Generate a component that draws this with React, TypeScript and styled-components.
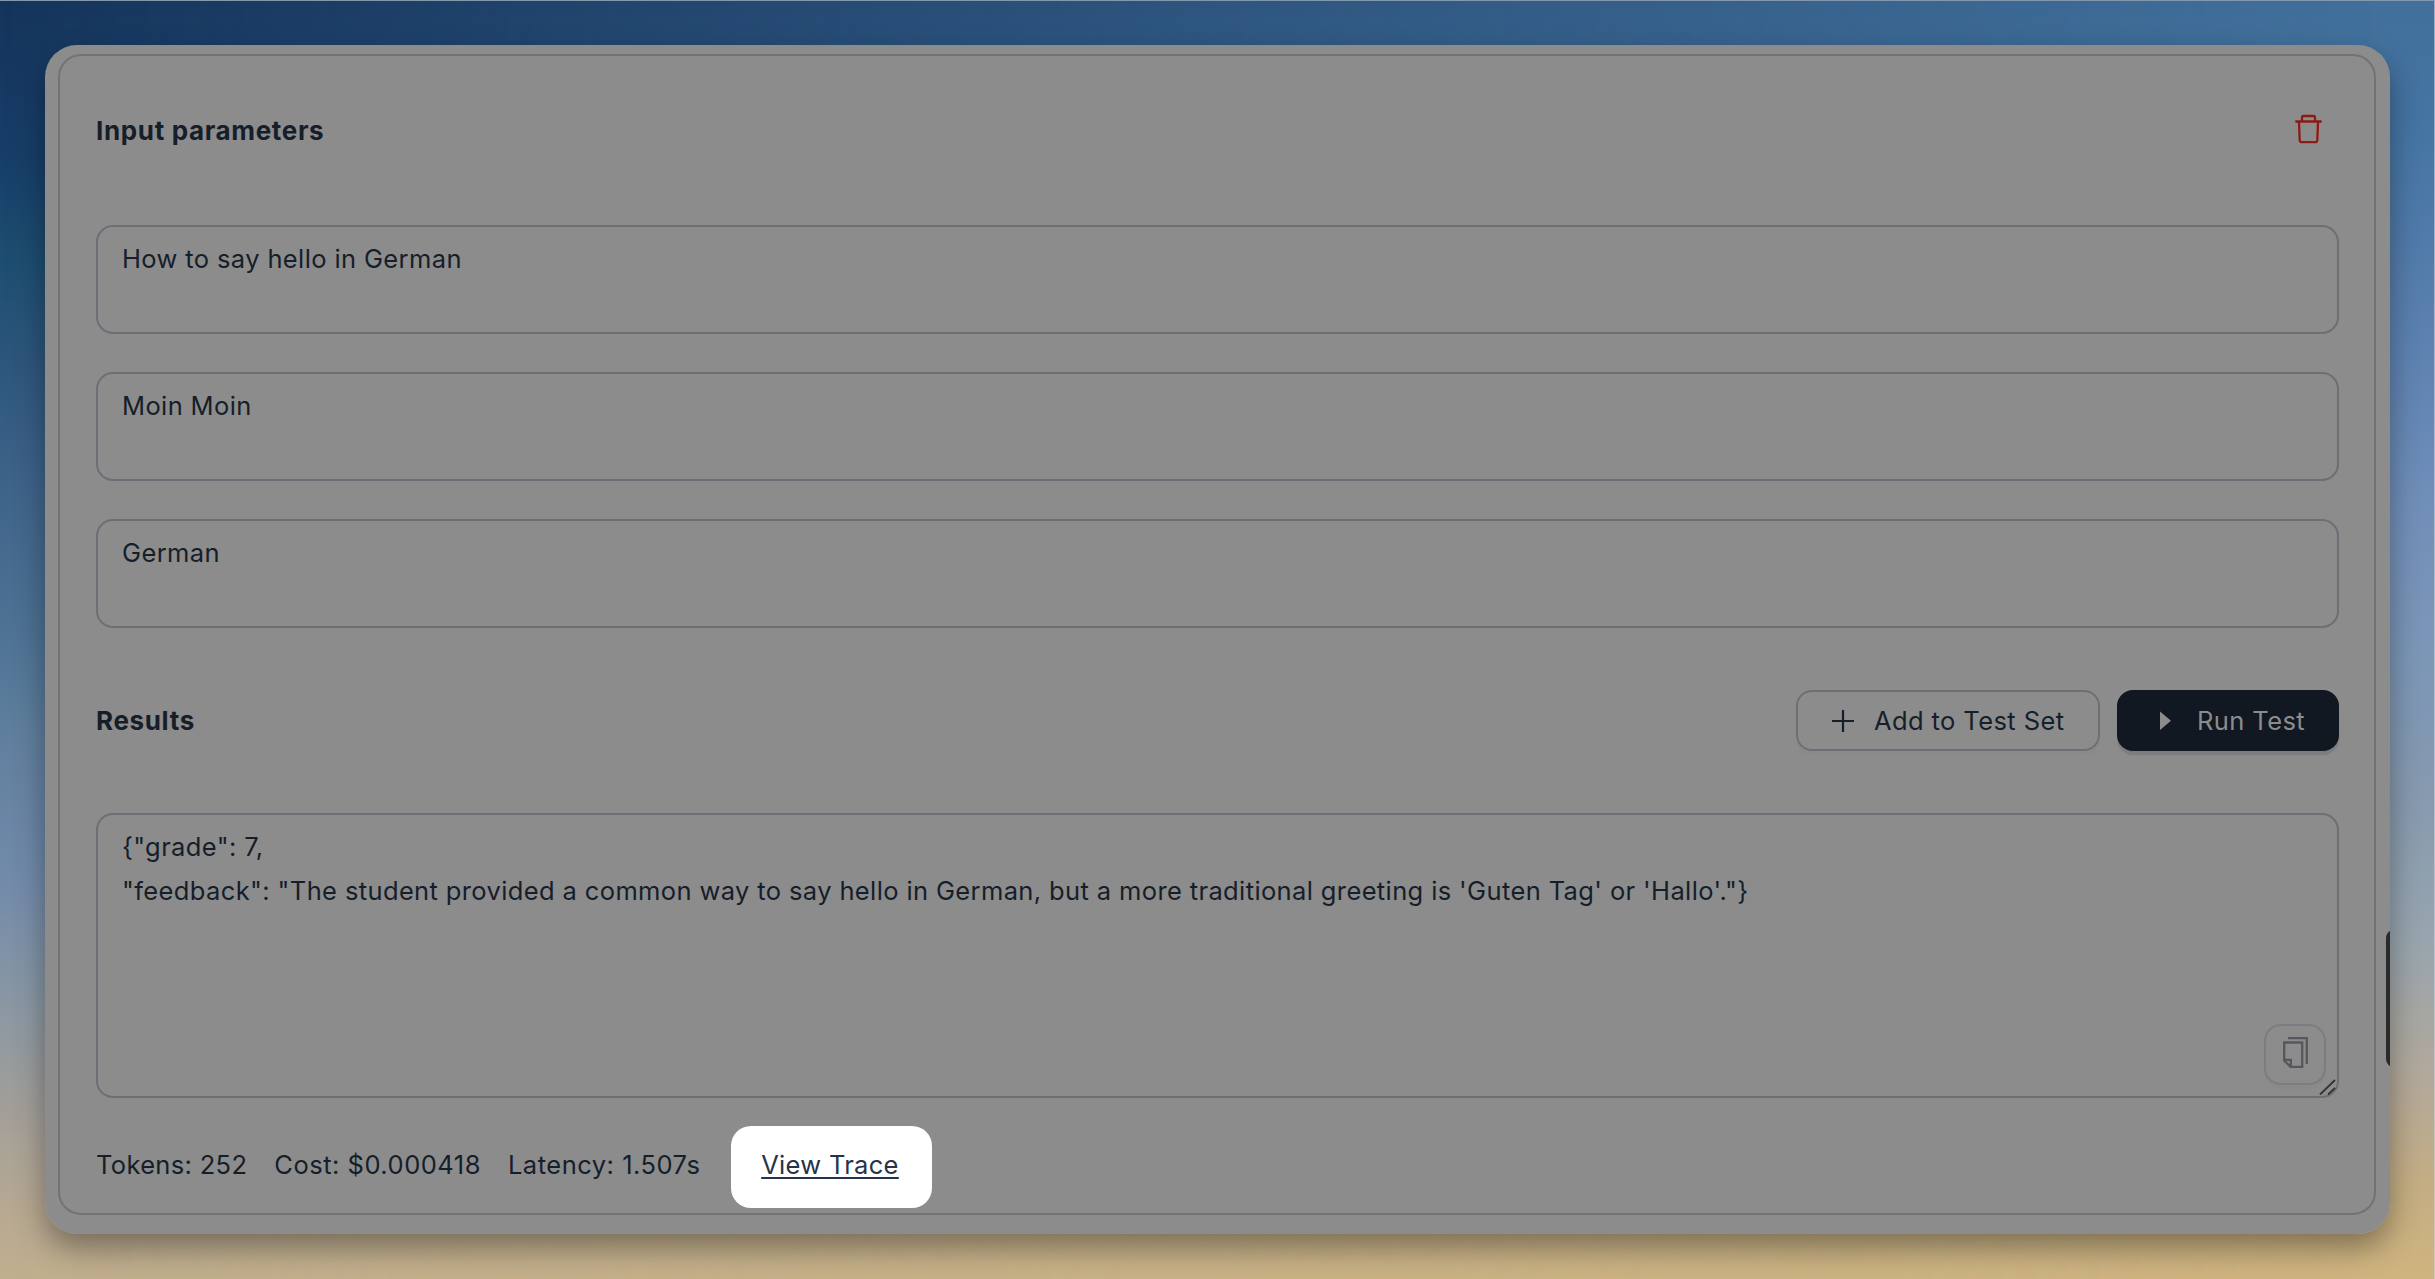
import React from "react";
import styled, { createGlobalStyle } from "styled-components";

const Global = createGlobalStyle`
  *, *::before, *::after { box-sizing: border-box; }
  html, body { margin: 0; padding: 0; }
  body { font-family: Inter, "Liberation Sans", sans-serif; color: #161e2a; overflow: hidden; }
  button, textarea { font: inherit; color: inherit; margin: 0; }
`;

const Desktop = styled.main`
  position: relative;
  width: 2435px;
  height: 1279px;
  padding: 45px;
  background: linear-gradient(
    180deg,
    #15345b 0,
    #173e68 160px,
    #1d4e70 262px,
    #2b547a 345px,
    #3f648a 490px,
    #4c7193 620px,
    #607f9e 735px,
    #718aaa 875px,
    #8997a4 1000px,
    #a29f99 1110px,
    #b5a893 1200px,
    #c1af8e 1279px
  );

  &::before {
    content: "";
    position: absolute;
    inset: 0;
    background: linear-gradient(
      180deg,
      #42709b 0,
      #4474a3 120px,
      #517baa 245px,
      #6386b4 400px,
      #718fb9 510px,
      #7b96b7 650px,
      #879aaf 800px,
      #97a5ae 940px,
      #a4a6a5 1000px,
      #b4a998 1090px,
      #c3ad83 1180px,
      #d0b47e 1279px
    );
    mask-image: linear-gradient(90deg, transparent, rgba(0, 0, 0, 0.56) 50%, #000 98%);
  }

  &::after {
    content: "";
    position: absolute;
    inset: 0;
    border-top: 1px solid #8298ad;
    border-right: 1px solid rgba(205, 215, 225, 0.6);
  }
`;

const WindowShadow = styled.div`
  position: relative;
  border-radius: 32px;
  box-shadow: 0 14px 30px rgba(0, 0, 0, 0.36);
`;

const Window = styled.section`
  position: relative;
  height: 1189px;
  padding: 9px 14px 19px 13px;
  border-radius: 32px;
  background: #8c8c8c;
  display: flex;
  overflow: hidden;
`;

const Scrollbar = styled.div`
  position: absolute;
  right: -12px;
  top: 885px;
  width: 16px;
  height: 137px;
  border-radius: 8px;
  background: #2a2a2a;
`;

const Card = styled.div`
  flex: 1;
  border: 2px solid #737373;
  border-radius: 23px;
  padding: 0 35px 0 36px;
  display: flex;
  flex-direction: column;
`;

const Header = styled.header<{ $height: number; $lift?: number }>`
  height: ${(p) => p.$height}px;
  padding-bottom: ${(p) => p.$lift ?? 0}px;
  display: flex;
  align-items: center;
  justify-content: space-between;
`;

const Title = styled.h2`
  margin: 0;
  font-size: 26px;
  line-height: 40px;
  font-weight: 700;
  letter-spacing: 0.65px;
`;

const IconButton = styled.button`
  width: 60px;
  height: 60px;
  padding: 0 1px 4px 0;
  border: 0;
  background: none;
  display: flex;
  align-items: center;
  justify-content: center;
`;

const Fields = styled.div`
  display: flex;
  flex-direction: column;
  gap: 38px;
`;

const Field = styled.textarea`
  display: block;
  width: 100%;
  height: 109px;
  padding: 10px 24px;
  border: 2px solid #6b7076;
  border-radius: 17px;
  background: transparent;
  font-size: 25.5px;
  line-height: 44px;
  letter-spacing: 0.375px;
  resize: none;
`;

const Output = styled.div`
  position: relative;
  height: 285px;
`;

const OutputField = styled(Field)`
  height: 285px;
`;

const Grip = styled.svg`
  position: absolute;
  right: 2px;
  bottom: 2px;
`;

const CopyButton = styled.button`
  position: absolute;
  right: 13px;
  bottom: 13px;
  width: 62px;
  height: 61px;
  padding: 0 0 5px 1px;
  border: 2px solid #7b7e80;
  border-radius: 17px;
  background: #8c8c8c;
  box-shadow: 0 4px 1px rgba(0, 0, 0, 0.02);
  display: flex;
  align-items: center;
  justify-content: center;
`;

const Actions = styled.div`
  display: flex;
  gap: 17px;
`;

const Button = styled.button<{ $primary?: boolean }>`
  height: 61px;
  width: ${(p) => (p.$primary ? 222 : 304)}px;
  padding: 0 0 0 ${(p) => (p.$primary ? 40 : 34)}px;
  display: flex;
  align-items: center;
  border: 2px solid ${(p) => (p.$primary ? "#111822" : "#6b7076")};
  border-radius: 16px;
  background: ${(p) => (p.$primary ? "#111822" : "transparent")};
  color: ${(p) => (p.$primary ? "#8c8c8c" : "#161e2a")};
  box-shadow: 0 4px 1px ${(p) => (p.$primary ? "rgba(60, 65, 80, 0.2)" : "rgba(0, 0, 0, 0.02)")};
  font-size: 25.5px;
  letter-spacing: 0.4px;
`;

const ButtonLabel = styled.span<{ $gap: number }>`
  margin-left: ${(p) => p.$gap}px;
  padding-top: 1px;
  line-height: 40px;
  white-space: nowrap;
`;

const Footer = styled.footer`
  display: flex;
  align-items: center;
  height: 82px;
  margin-top: 28px;
  font-size: 25.5px;
  line-height: 40px;
  white-space: nowrap;
`;

const Metric = styled.span<{ $tracking: number }>`
  padding-bottom: 5px;
  margin-right: 27px;
  letter-spacing: ${(p) => p.$tracking}px;
`;

const TraceBox = styled.div`
  width: 201px;
  height: 82px;
  margin-left: 4px;
  padding: 0 4px 5px 0;
  border-radius: 20px;
  background: #fff;
  display: flex;
  align-items: center;
  justify-content: center;
`;

const TraceLink = styled.a`
  color: #26334a;
  letter-spacing: 0.3px;
  text-decoration: underline;
  text-decoration-thickness: 2px;
  text-underline-offset: 3px;
  text-decoration-skip-ink: none;
`;

const output = `{"grade": 7,
"feedback": "The student provided a common way to say hello in German, but a more traditional greeting is 'Guten Tag' or 'Hallo'."}`;

export default function App() {
  return (
    <>
      <Global />
      <Desktop>
        <WindowShadow>
          <Window>
            <Card>
              <Header $height={169} $lift={20}>
                <Title>Input parameters</Title>
                <IconButton aria-label="Delete">
                  <svg width="27" height="30" viewBox="0 0 27 30" fill="none" stroke="#8e1a14" strokeWidth="2.3">
                    <path d="M.3 7.5h26.400M7 7V3.500Q7 2 8.500 2h10Q20 2 20 3.500V7M4 8l.7 18.200q.1 2 2 2h13.600q1.900 0 2-2L23 8" />
                  </svg>
                </IconButton>
              </Header>
              <Fields>
                <Field readOnly value="How to say hello in German" />
                <Field readOnly value="Moin Moin" />
                <Field readOnly value="German" />
              </Fields>
              <Header $height={185}>
                <Title>Results</Title>
                <Actions>
                  <Button>
                    <svg width="22" height="22" viewBox="0 0 22 22" stroke="#161e2a" strokeWidth="2.2">
                      <path d="M0 11h22M11 0v22" />
                    </svg>
                    <ButtonLabel $gap={20}>Add to Test Set</ButtonLabel>
                  </Button>
                  <Button $primary>
                    <svg width="12" height="20" viewBox="0 0 12 20">
                      <path d="M1 .5v18.600L12 9.800z" fill="#8c8c8c" />
                    </svg>
                    <ButtonLabel $gap={26}>Run Test</ButtonLabel>
                  </Button>
                </Actions>
              </Header>
              <Output>
                <OutputField readOnly value={output} />
                <CopyButton aria-label="Copy">
                  <svg width="26" height="31" viewBox="0 0 26 31" fill="none" stroke="#54585c" strokeWidth="2.3">
                    <path d="M5 1.200h18.800V27M1.200 5.500h18v24.300H7.500l-6.300-6.300zM1.200 22.800h6.600v7" />
                  </svg>
                </CopyButton>
                <Grip width="18" height="18" viewBox="0 0 18 18" stroke="#333" strokeWidth="1.8">
                  <path d="M1 16.500L16 2M9 16.500l7-6.500" />
                </Grip>
              </Output>
              <Footer>
                <Metric $tracking={0.33}>Tokens: 252</Metric>
                <Metric $tracking={0.5}>Cost: $0.000418</Metric>
                <Metric $tracking={0.5}>Latency: 1.507s</Metric>
                <TraceBox>
                  <TraceLink>View Trace</TraceLink>
                </TraceBox>
              </Footer>
            </Card>
            <Scrollbar />
          </Window>
        </WindowShadow>
      </Desktop>
    </>
  );
}
